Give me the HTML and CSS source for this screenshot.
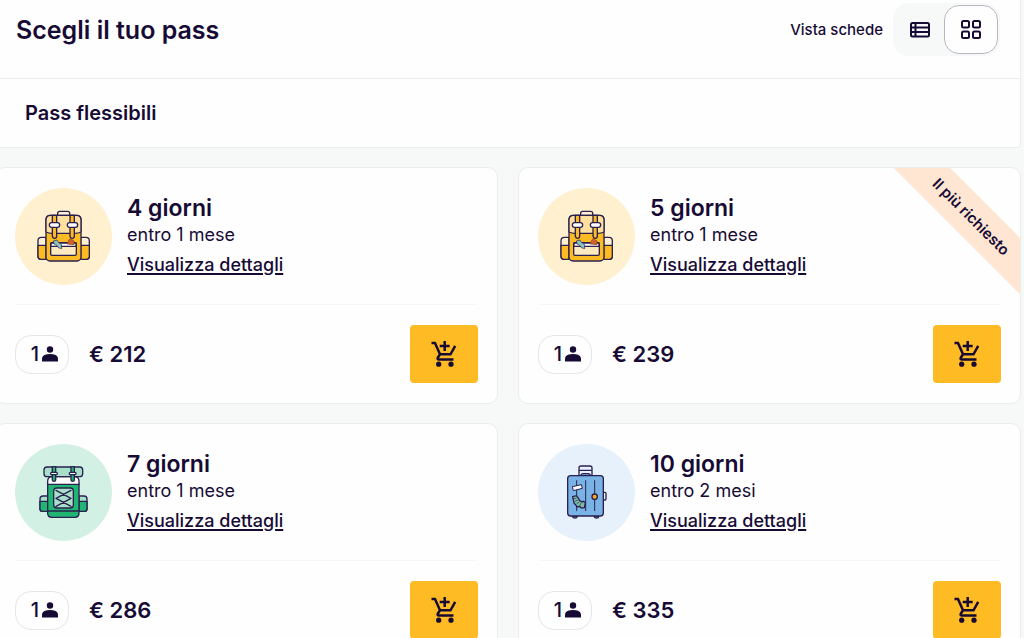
FILE: index.html
```
<!DOCTYPE html>
<html lang="it">
<head>
  <meta charset="UTF-8">
  <meta name="viewport" content="width=device-width, initial-scale=1.0">
  <title>Scegli il tuo pass</title>
  <link rel="stylesheet" href="styles.css">
</head>
<body>
  <!-- Shared icons -->
  <svg class="sprite" aria-hidden="true">
    <symbol id="backpack" viewBox="5 4 291 291">
      <g stroke="#2b2150" stroke-width="4" stroke-linejoin="round" stroke-linecap="round">
        <path d="M98 152H84q-10 0-10 10v47q0 9 9 9h15z" fill="#fff0d0"/>
        <path d="M202 152h16q10 0 10 10v47q0 9-9 9h-17z" fill="#fff0d0"/>
        <path d="M74 176h24v42H83q-9 0-9-9zM202 176h26v33q0 9-9 9h-17z" fill="#fdbb23"/>
        <rect x="98" y="86" width="105" height="137" rx="12" fill="#fdbb23"/>
        <path d="M98 136v-36q0-14 14-14h77q14 0 14 14v36q-8 4-18 4h-69q-10 0-18-4z" fill="#ffe0a0"/>
        <path d="M133 86v-6q0-6 6-6h24q6 0 6 6v6" fill="none"/>
        <path d="M117 86h13v62q0 7-6 7t-7-7zM170 86h13v62q0 7-6 7t-7-7z" fill="#fdbb23"/>
        <rect x="108" y="108" width="31" height="14" rx="7" fill="#fff"/>
        <rect x="162" y="108" width="31" height="14" rx="7" fill="#fff"/>
        <rect x="112" y="168" width="77" height="38" rx="4" fill="#ffe9be"/>
        <path d="M113 169h75v10h-75z" fill="#fff"/>
      </g>
      <path d="M120 163l11-3 4 7 9 6 1 13-10-3-4-7-8-3z" fill="#8ec5c1" stroke="#2b2150" stroke-width="2"/>
      <path d="M161 172l6-13 6-5 3 6 6 3v11z" fill="#cf6330" stroke="#83401d" stroke-width="2"/>
    </symbol>
    <symbol id="trekking" viewBox="5 4 291 291">
      <g stroke="#2b2150" stroke-width="4" stroke-linejoin="round" stroke-linecap="round">
        <path d="M103 160H89q-9 0-9 9v29q0 8 8 8h15zM197 160h15q9 0 9 9v29q0 8-8 8h-16z" fill="#a7dfc9"/>
        <path d="M80 176h23v30H88q-8 0-8-8zM197 176h24v22q0 8-8 8h-16z" fill="#21b573"/>
        <path d="M103 123h94v89q0 12-12 12h-70q-12 0-12-12z" fill="#21b573"/>
        <path d="M103 125v-9q0-14 14-14h66q14 0 14 14v9z" fill="#fff"/>
        <rect x="92" y="73" width="116" height="29" rx="9" fill="#a7dfc9"/>
        <path d="M117 72h10v40q0 4-5 4t-5-4zM173 72h10v40q0 4-5 4t-5-4z" fill="#21b573"/>
        <rect x="112" y="89" width="20" height="7" rx="3" fill="#fff"/>
        <rect x="168" y="89" width="20" height="7" rx="3" fill="#fff"/>
        <rect x="121" y="136" width="59" height="60" rx="9" fill="#a7dfc9"/>
        <path d="M128 143l45 24M173 143l-45 24M128 167l45 24M173 167l-45 24" fill="none" stroke-width="4"/>
        <path d="M104 205h92" fill="none"/>
      </g>
    </symbol>
    <symbol id="suitcase" viewBox="5 4 291 291">
      <g stroke="#2b2150" stroke-width="4" stroke-linejoin="round" stroke-linecap="round">
        <path d="M128 98V76q0-6 6-6h27q6 0 6 6v22M129 83h37" fill="none"/>
        <path d="M134 99q0-6 7-6h14q7 0 7 6z" fill="#79b2e4"/>
        <rect x="199" y="149" width="10" height="23" rx="3" fill="#e7f1fb"/>
        <path d="M109 220h13v3q0 3-6 3t-7-3zM174 220h13v3q0 3-6 3t-7-3z" fill="#79b2e4"/>
        <rect x="94" y="99" width="107" height="121" rx="9" fill="#79b2e4"/>
        <path d="M121 114v90M148 114v90M175 114v90" fill="none" stroke-width="3"/>
        <circle cx="175" cy="162" r="8" fill="#fbaa16"/>
      </g>
      <path d="M108 132l27-6 3 11-27 7z" fill="#fff" stroke="#2b2150" stroke-width="3"/>
      <path d="M109 162l11-3 6 7 4 8 8 4 4-2 5 4-3 15-9 1-5-5-7 2-10-12z" fill="#7dbda5" stroke="#2b2150" stroke-width="4"/>
      <path d="M113 168l8-2M116 176l9-4M121 183l8-5M131 188l3-7" stroke="#2b2150" stroke-width="2"/>
    </symbol>
    <symbol id="cart" viewBox="0 0 28 28">
      <path d="M1.500 3h3.500l5 11.300h10.500l4.700-8.500M10 14.300l-2.200 3.400q-.8 1.800 1.200 1.800h14.500M14.700 1v10M9.700 6h10" fill="none" stroke="#170b35" stroke-width="2.500"/>
      <circle cx="8.700" cy="24.200" r="2.600" fill="#170b35"/>
      <circle cx="21" cy="24.200" r="2.600" fill="#170b35"/>
    </symbol>
    <symbol id="person" viewBox="0 0 16 16">
      <circle cx="8" cy="3.500" r="3.200" fill="#170b35"/>
      <path d="M0 15.500v-2.500q0-3 3-4.200 2-.9 5-.9t5 .9q3 1.200 3 4.200v2.500z" fill="#170b35"/>
    </symbol>
  </svg>

  <main class="page">
    <section class="panel">
      <header class="panel-header">
        <h1>Scegli il tuo pass</h1>
        <div class="view">
          <span class="view-label">Vista schede</span>
          <div class="toggle">
            <button type="button" class="toggle-btn" aria-label="Vista elenco" aria-pressed="false">
              <svg width="20" height="16" viewBox="0 0 20 16" fill="none" stroke="#170b35" stroke-width="2">
                <rect x="1" y="1" width="18" height="13.500" rx="1.500"/>
                <path d="M1 5.500h18M1 10h18M5.500 1v13.500"/>
              </svg>
            </button>
            <button type="button" class="toggle-btn active" aria-label="Vista schede" aria-pressed="true">
              <svg width="20" height="20" viewBox="0 0 20 20" fill="none" stroke="#170b35" stroke-width="2">
                <rect x="1" y="1" width="7" height="6.500" rx="1.500"/>
                <rect x="12" y="1" width="7" height="6.500" rx="1.500"/>
                <rect x="1" y="11.500" width="7" height="6.500" rx="1.500"/>
                <rect x="12" y="11.500" width="7" height="6.500" rx="1.500"/>
              </svg>
            </button>
          </div>
        </div>
      </header>
      <h2>Pass flessibili</h2>
    </section>

    <section class="cards">
      <article class="card">
        <div class="card-top">
          <div class="picture yellow"><svg><use href="#backpack"/></svg></div>
          <div class="info">
            <h3>4 giorni</h3>
            <p>entro 1 mese</p>
            <a href="#">Visualizza dettagli</a>
          </div>
        </div>
        <div class="card-bottom">
          <span class="people">1<svg><use href="#person"/></svg></span>
          <strong class="price">€ 212</strong>
          <button type="button" class="add" aria-label="Aggiungi al carrello"><svg><use href="#cart"/></svg></button>
        </div>
      </article>

      <article class="card">
        <span class="ribbon">Il più richiesto</span>
        <div class="card-top">
          <div class="picture yellow"><svg><use href="#backpack"/></svg></div>
          <div class="info">
            <h3>5 giorni</h3>
            <p>entro 1 mese</p>
            <a href="#">Visualizza dettagli</a>
          </div>
        </div>
        <div class="card-bottom">
          <span class="people">1<svg><use href="#person"/></svg></span>
          <strong class="price">€ 239</strong>
          <button type="button" class="add" aria-label="Aggiungi al carrello"><svg><use href="#cart"/></svg></button>
        </div>
      </article>

      <article class="card">
        <div class="card-top">
          <div class="picture green"><svg><use href="#trekking"/></svg></div>
          <div class="info">
            <h3>7 giorni</h3>
            <p>entro 1 mese</p>
            <a href="#">Visualizza dettagli</a>
          </div>
        </div>
        <div class="card-bottom">
          <span class="people">1<svg><use href="#person"/></svg></span>
          <strong class="price">€ 286</strong>
          <button type="button" class="add" aria-label="Aggiungi al carrello"><svg><use href="#cart"/></svg></button>
        </div>
      </article>

      <article class="card">
        <div class="card-top">
          <div class="picture blue"><svg><use href="#suitcase"/></svg></div>
          <div class="info">
            <h3>10 giorni</h3>
            <p>entro 2 mesi</p>
            <a href="#">Visualizza dettagli</a>
          </div>
        </div>
        <div class="card-bottom">
          <span class="people">1<svg><use href="#person"/></svg></span>
          <strong class="price">€ 335</strong>
          <button type="button" class="add" aria-label="Aggiungi al carrello"><svg><use href="#cart"/></svg></button>
        </div>
      </article>
    </section>
  </main>
</body>
</html>
```
FILE: styles.css
```
* {
  box-sizing: border-box;
}

body {
  margin: 0;
  font-family: Inter, "Open Sans", sans-serif;
  color: #170b35;
  background: #f7f9f9;
  overflow-x: hidden;
}

h1, h2, h3, p {
  margin: 0;
  font-weight: 600;
}

.sprite {
  display: none;
}

.page {
  margin: 0 3px 0 -5px;
  padding-bottom: 20px;
}

.panel {
  background: #fefefe;
  border: 1px solid #ebeced;
  border-top: none;
  border-radius: 0 0 4px 4px;
}

.panel-header {
  display: flex;
  justify-content: space-between;
  align-items: center;
  padding: 3px 20px 22px;
  border-bottom: 1px solid #ebeced;
}

h1 {
  font-size: 25px;
  line-height: 32px;
}

h2 {
  padding: 18px 29px;
  font-size: 20px;
  line-height: 32px;
}

.view {
  display: flex;
  align-items: center;
  gap: 10px;
}

.view-label {
  font-size: 15px;
  font-weight: 500;
}

.toggle {
  display: flex;
  padding: 2px;
  border-radius: 16px;
  background: #f7f9f9;
}

.toggle-btn {
  display: flex;
  justify-content: center;
  align-items: center;
  width: 49px;
  height: 49px;
  padding: 0;
  border: none;
  border-radius: 15px;
  background: none;
  cursor: pointer;
}

.toggle-btn.active {
  width: 54px;
  border: 1px solid #b9b6c3;
  background: #fefefe;
}

.cards {
  display: grid;
  grid-template-columns: 1fr 1fr;
  gap: 19px 20px;
  margin-top: 19px;
}

.card {
  position: relative;
  overflow: hidden;
  padding: 20px 19px;
  background: #fefefe;
  border: 1px solid #ebeced;
  border-radius: 10px;
}

.card-top {
  display: flex;
  gap: 15px;
  padding-bottom: 19px;
  border-bottom: 1px solid #f6f7f7;
}

.picture {
  width: 97px;
  height: 97px;
  border-radius: 50%;
}

.picture svg {
  display: block;
  width: 97px;
  height: 97px;
}

.yellow {
  background: #fff0d0;
}

.green {
  background: #d3f0e5;
}

.blue {
  background: #e7f1fb;
}

.info {
  padding-top: 5px;
}

.info h3 {
  font-size: 23px;
  line-height: 30px;
}

.info p {
  font-size: 18px;
  font-weight: 400;
  line-height: 24px;
}

.info a {
  display: inline-block;
  margin-top: 4px;
  color: inherit;
  font-size: 18px;
  font-weight: 500;
  line-height: 28px;
  text-underline-offset: 2px;
  text-decoration-thickness: 2px;
}

.card-bottom {
  display: flex;
  align-items: center;
  gap: 20px;
  padding-top: 20px;
}

.people {
  display: flex;
  justify-content: flex-end;
  align-items: center;
  gap: 3px;
  width: 54px;
  height: 39px;
  padding-right: 10px;
  border: 1px solid #e6e5ea;
  border-radius: 16px;
  font-size: 20px;
  font-weight: 500;
}

.people svg {
  width: 16px;
  height: 16px;
}

.price {
  font-size: 22px;
  font-weight: 600;
}

.add {
  display: flex;
  justify-content: center;
  align-items: center;
  width: 68px;
  height: 58px;
  margin-left: auto;
  padding: 0;
  border: none;
  border-radius: 4px;
  background: #febb23;
  cursor: pointer;
}

.add svg {
  width: 28px;
  height: 28px;
}

.ribbon {
  position: absolute;
  top: 29px;
  right: -51px;
  width: 200px;
  background: #ffe6d2;
  font-size: 15px;
  font-weight: 600;
  line-height: 40px;
  text-align: center;
  transform: rotate(45deg);
}
```
